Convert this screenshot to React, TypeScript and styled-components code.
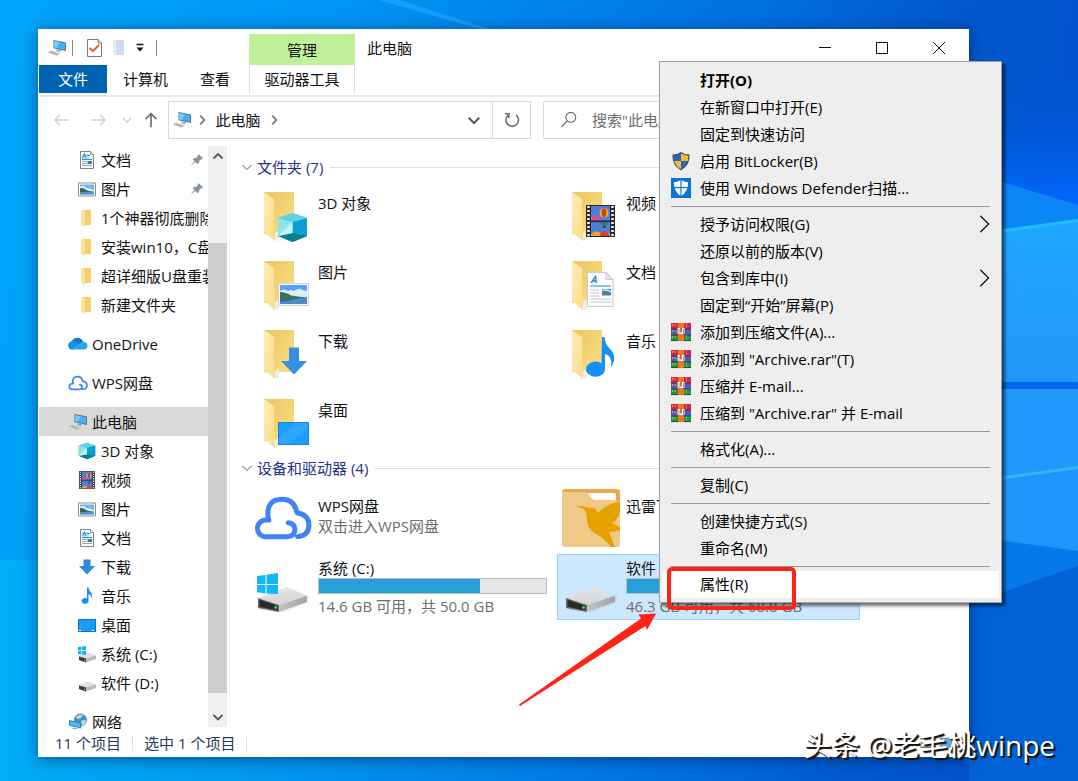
import React from "react";
import styled, { createGlobalStyle, css } from "styled-components";

const GlobalStyle = createGlobalStyle`
  *, *::before, *::after { box-sizing: border-box; }
  html, body, #root { height: 100%; }
  body { margin: 0; overflow: hidden; }
  body, button, input {
    font-family: "Open Sans", "Noto Sans CJK SC", sans-serif;
    font-size: 15px;
    line-height: 20px;
  }
  button { margin: 0; padding: 0; border: 0; background: none; color: inherit; text-align: left; cursor: default; }
  a { color: inherit; text-decoration: none; }
  ul { list-style: none; margin: 0; padding: 0; }
  h2 { margin: 0; font-weight: 400; font-size: 15px; }
  svg { display: block; flex: none; }
`;

/* ---------- desktop ---------- */

const Desktop = styled.div`
  position: relative;
  display: flex;
  height: 100vh;
  padding: 29px 109px 24px 38px;
  overflow: hidden;
  background: #0078e0;
`;

const WallpaperSvg = styled.svg`
  position: absolute;
  inset: 0;
  width: 100%;
  height: 100%;
`;

const Wallpaper = () => (
  <WallpaperSvg viewBox="0 0 1078 781" preserveAspectRatio="none" aria-hidden="true">
    <defs>
      <linearGradient id="sky" x1="0" y1="0" x2="1" y2="0.1">
        <stop offset="0" stopColor="#00a6fa" />
        <stop offset="0.33" stopColor="#0093f4" />
        <stop offset="0.66" stopColor="#0074e2" />
        <stop offset="0.88" stopColor="#0058cc" />
        <stop offset="1" stopColor="#0052cc" />
      </linearGradient>
      <linearGradient id="glow" x1="0" y1="0" x2="1" y2="0">
        <stop offset="0" stopColor="#00b4f6" stopOpacity="0.9" />
        <stop offset="1" stopColor="#0068d8" stopOpacity="0" />
      </linearGradient>
      <linearGradient id="pane" x1="0" y1="0" x2="0" y2="1">
        <stop offset="0" stopColor="#1fa6ff" />
        <stop offset="1" stopColor="#2196fa" />
      </linearGradient>
      <linearGradient id="deep" x1="0" y1="0" x2="0" y2="1">
        <stop offset="0" stopColor="#0052cc" stopOpacity="0" />
        <stop offset="1" stopColor="#0068ff" />
      </linearGradient>
    </defs>
    <rect width="1078" height="781" fill="url(#sky)" />
    <rect y="560" width="900" height="221" fill="url(#glow)" opacity="0.7" />
    <path d="M378 0L480 29H490L400 0Z" fill="#20a4ff" opacity="0.7" />
    <rect x="969" y="60" width="109" height="145" fill="url(#deep)" />
    <path d="M969 172L1078 205V222L969 234Z" fill="#0a86f6" />
    <path d="M969 234L1078 219V382H969Z" fill="url(#pane)" />
    <path d="M969 234L1078 219V222L969 237Z" fill="#22bcff" />
    <rect x="969" y="382" width="109" height="7" fill="#0068ec" />
    <rect x="969" y="389" width="109" height="170" fill="#2098fc" />
    <path d="M969 482L1078 467V552L969 536Z" fill="#1f94fa" />
    <path d="M969 481L1078 466V469L969 484Z" fill="#2cb6ff" />
    <path d="M969 536L1078 551V568L969 604Z" fill="#0579ea" />
    <path d="M969 604L1078 566V781H969Z" fill="#0062d4" />
  </WallpaperSvg>
);

/* ---------- icons ---------- */

type IconProps = { size?: number };

const Glyph = ({ size = 20, children, box = "0 0 20 20" }: IconProps & { children: React.ReactNode; box?: string }) => (
  <svg width={size} height={size} viewBox={box} aria-hidden="true">{children}</svg>
);

const PcIcon = ({ size = 20 }: IconProps) => (
  <Glyph size={size}>
    <path d="M6.5 2L19 4.6V13L6.5 10.2Z" fill="#5c6f7c" />
    <path d="M7.2 3L18.2 5.3V12L7.2 9.5Z" fill="#3fb2f7" />
    <path d="M7.2 3L13 4.2L9.5 10L7.2 9.5Z" fill="#74ccfb" />
    <path d="M10 11.2L14.5 12.3L12.8 14L9 13Z" fill="#9aa7b0" />
    <path d="M1 14.2L4 12.6L13.5 15L10 17.6Z" fill="#c9d1d6" />
    <path d="M1 14.2L10 17.6M2.5 13.4L11.5 16.5M5 13L4 15.2M8 14L7 16.2" stroke="#98a4ac" strokeWidth="0.6" fill="none" />
  </Glyph>
);

const DocIcon = () => (
  <Glyph>
    <path d="M3.500 1.500H13.500L16.500 4.500V18.500H3.500Z" fill="#fff" stroke="#7d868c" />
    <path d="M13.500 1.500V4.500H16.500" fill="#e5e8ea" stroke="#7d868c" strokeWidth="0.8" />
    <path d="M5 4H12V9H5Z" fill="#bfe2f5" />
    <path d="M5.500 8L7.500 4L9 8M10 5.500H13M5 9.500H15" stroke="#2a8fcf" strokeWidth="1.1" fill="none" />
    <path d="M5 11.500H9.500M5 13.500H9.500M5 15.500H15" stroke="#8d979e" strokeWidth="0.900" fill="none" />
    <path d="M10.500 11H15V14H10.500Z" fill="#2f7fae" />
  </Glyph>
);

const PictureIcon = () => (
  <Glyph>
    <path d="M1.5 4H18.5V17H1.5Z" fill="#fff" stroke="#8a9299" />
    <path d="M3 5.5H17V15.5H3Z" fill="#6fb4ee" />
    <path d="M3 7.5Q7 6 10 9Q13 9 17 11V12.5H3Z" fill="#d9ecfa" />
    <path d="M3 9Q7 9 10 11.4L17 13V13.5H3Z" fill="#2f6a54" />
    <path d="M3 13.2H17V15.5H3Z" fill="#4f98cf" />
  </Glyph>
);

const SmallFolderIcon = () => (
  <Glyph>
    <path d="M6 2H14V17H6Z" fill="#f3d06c" />
    <path d="M4 2L8 4V19L4 17Z" fill="#fbe39d" />
  </Glyph>
);

const OneDriveIcon = () => (
  <Glyph>
    <path d="M4.5 15.5A4.2 4.2 0 0 1 4 7.2A6 6 0 0 1 14.6 7Z" fill="#0c62b8" />
    <path d="M4 7.3A6 6 0 0 1 14.8 7.6L17 9L8 13Z" fill="#1173cf" />
    <path d="M3.8 15.5A4 4 0 0 1 2 8.2Q5 6.2 8 8.2L16 13Z" fill="#1a8fe0" />
    <path d="M3 15.2L12.4 9.2A4.2 4.2 0 0 1 16.3 8A3.8 3.8 0 0 1 16.3 15.5H4Z" fill="#28a8ea" />
  </Glyph>
);

const WpsCloud = ({ size = 20 }: IconProps) => (
  <Glyph size={size} box="0 0 56 56">
    <path
      d="M14.500 30A12 12 0 0 0 13 30A8 8 0 0 0 10 46H33Q39.500 45 39.500 38.500Q39 33 33 32.500M14 30Q10.500 10 27 10Q39 10 41.500 23Q53 25 53 35Q53 45 42 46"
      fill="none" stroke="#3f83f5" strokeWidth="4.800" strokeLinecap="round" strokeLinejoin="round" />
  </Glyph>
);

const CubeShape = () => (
  <>
    <path d="M1 5L15.500 0L30 5V23L15.500 29L1 23Z" fill="#3fc4d8" />
    <path d="M1 5L15.500 9V29L1 23Z" fill="#8fe4ea" />
    <path d="M15.500 9L30 5V23L15.500 29Z" fill="#0aa0d4" />
    <path d="M1 5L15.500 0L30 5L15.500 9Z" fill="#5fd2e4" />
    <path d="M15.500 20L30 23L15.500 29L1 23Z" fill="#0a7f94" />
    <path d="M1 23L15.500 9V20Z" fill="#c2f2f3" />
  </>
);

const CubeIcon = () => (
  <Glyph box="-2 -1 35 31"><CubeShape /></Glyph>
);

const FilmShape = () => (
  <>
    <rect width="29" height="32" fill="#2b2b2b" />
    <rect x="5" y="1" width="19" height="30" fill="#4a7fe0" />
    <path d="M5 12L8 9L11 12L14 11V16H5Z" fill="#d8508c" />
    <ellipse cx="18" cy="8" rx="4.500" ry="5" fill="#e8b71e" />
    <path d="M16.500 3.500Q14.500 8 17 12.500H19Q21.500 8 19.500 3.500Z" fill="#cf3b23" />
    <path d="M14 17.500H23L19.500 21H17Z" fill="#3c7a35" />
    <path d="M17.500 21H19.500V23H17.500Z" fill="#333" />
    <path d="M5 29Q10 24 15 28L24 28V31H5Z" fill="#e0a52a" />
    <path d="M14 31A4.500 5 0 0 1 23 31Z" fill="#d4402a" />
    <rect x="5" y="15.500" width="19" height="1.500" fill="#10264f" />
    <path d="M2.500 1V32M26.500 1V32" stroke="#fff" strokeWidth="2.400" strokeDasharray="2 2" />
  </>
);

const FilmIcon = () => (
  <Glyph box="-3 -2 35 36"><FilmShape /></Glyph>
);

const DownIcon = () => (
  <Glyph><path d="M6.500 2.500H13.500V9H18L10 17.500L2 9H6.500Z" fill="#2f86da" /></Glyph>
);

const MusicIcon = () => (
  <Glyph>
    <path d="M10 1.500H11.500Q12 5 14.500 7.500Q16 10 14.500 13Q14.500 9 11.500 8V14.500A3.500 2.900 0 1 1 10 12.500Z" fill="#1590f2" />
  </Glyph>
);

const DesktopIcon = () => (
  <Glyph>
    <rect x="1" y="4" width="18" height="13" fill="#1273c4" />
    <rect x="2" y="5" width="16" height="11" fill="#1d9cf6" />
    <path d="M2 15.500H4M15 15.500H17" stroke="#fff" strokeWidth="1" />
  </Glyph>
);

const DriveIcon = ({ windows }: { windows?: boolean }) => (
  <Glyph>
    <path d="M2 12.500L10 8.800L19 11.500V15L9 18.500L2 16Z" fill="#b9bbbd" />
    <path d="M2 12.500L10 8.800L19 11.500L9 14.500Z" fill="#dfe0e1" />
    <path d="M2 12.500L9 14.500V18.500L2 16Z" fill="#3a3c3e" />
    <path d="M7 16H8.200V17H7Z" fill="#4be04b" />
    {windows && <path d="M1 3L4.500 2.500V6.200H1ZM5.200 2.400L9 2V6.200H5.200ZM1 7H4.500V10.500L1 10ZM5.200 7H9V11L5.200 10.600Z" fill="#12b0ef" />}
  </Glyph>
);

const NetworkIcon = () => (
  <Glyph>
    <circle cx="12.500" cy="8" r="6.500" fill="#4f8fb8" />
    <path d="M8 5Q11 2 15 3Q13 7 9 7ZM13 9Q17 7 18.500 9Q17 13 14 14Z" fill="#b5d9ea" />
    <path d="M1 8L13 10.500V16.500L1 13.500Z" fill="#2a7db8" />
    <path d="M2 9.200L12 11.300V15.200L2 12.700Z" fill="#4fb8f6" />
    <path d="M6 15.500L11 17L9 18.500L4 17Z" fill="#93a2ac" />
  </Glyph>
);

const PinIcon = () => (
  <Glyph size={14} box="0 0 14 14">
    <path d="M8.500 1L13 5.200L11.800 6L9.500 7.500L8.700 10.500L7.500 11L5.300 8.900L1.500 12.500L1 12.400L4.600 8.100L2.800 6.200L3.500 5.200L6.600 4.800L8 2.500Z" fill="#8594a0" />
  </Glyph>
);

const ShieldIcon = () => (
  <Glyph>
    <path d="M10 1Q14 3.500 18.500 3.500Q19.500 14 10 19.500Q0.500 14 1.500 3.500Q6 3.500 10 1Z" fill="#4b4f55" />
    <path d="M10 2.500Q6.500 4.600 2.800 4.800Q2.600 7.500 3.200 10H10Z" fill="#1f66c4" />
    <path d="M10 2.500Q13.500 4.600 17.200 4.800Q17.400 7.500 16.800 10H10Z" fill="#fdbb2e" />
    <path d="M10 18Q4.800 15 3.200 10H10Z" fill="#fdbb2e" />
    <path d="M10 18Q15.200 15 16.800 10H10Z" fill="#1f66c4" />
  </Glyph>
);

const DefenderIcon = () => (
  <Glyph>
    <rect width="20" height="20" fill="#0a74d8" />
    <path d="M10 2Q13 4 17 4.200Q17.600 13.500 10 18Q2.400 13.500 3 4.200Q7 4 10 2Z" fill="#fff" />
    <path d="M10 2V18M2.500 9.600H17.500" stroke="#0a74d8" strokeWidth="1.200" />
  </Glyph>
);

const RarIcon = () => (
  <Glyph>
    <rect y="1" width="20" height="6" fill="#d0254f" />
    <rect y="7" width="20" height="6" fill="#5358bc" />
    <rect y="13" width="20" height="6" fill="#1f9a3e" />
    <path d="M0 7H20M0 13H20M0 18.600H20" stroke="#2b2340" strokeWidth="0.700" />
    <path d="M1.500 2V18M4 2V18" stroke="#f0b030" strokeWidth="0.900" strokeDasharray="2 4" />
    <rect x="7" y="1" width="6" height="18" fill="#f0761c" />
    <rect x="6.500" y="6" width="7" height="6" fill="#fff" />
    <path d="M8 7V12M12.500 7V12" stroke="#77757a" strokeWidth="0.800" />
    <path d="M10 6V10.500" stroke="#d83a1c" strokeWidth="1.600" />
    <path d="M15.500 1V6M15.500 13V18" stroke="#fff" strokeOpacity="0.3" strokeWidth="1" />
  </Glyph>
);

const Chevron = ({ dir, color = "#5a5a5a", size = 12, weight = 1.5 }: { dir: "up" | "down" | "right"; color?: string; size?: number; weight?: number }) => {
  const d = { up: "M1.500 8.500L6 4L10.500 8.500", down: "M1.500 4L6 8.500L10.500 4", right: "M4 1.500L8.500 6L4 10.500" }[dir];
  return <Glyph size={size} box="0 0 12 12"><path d={d} fill="none" stroke={color} strokeWidth={weight} /></Glyph>;
};

/* Large open folder with an emblem over its lower right corner. */
const BigFolder = ({ children }: { children: React.ReactNode }) => (
  <svg width="58" height="58" viewBox="0 0 58 58" aria-hidden="true">
    <defs>
      <linearGradient id="folderBack" x1="0" y1="0" x2="1" y2="1">
        <stop offset="0" stopColor="#ecc660" />
        <stop offset="1" stopColor="#fbdf86" />
      </linearGradient>
      <linearGradient id="folderFront" x1="0" y1="0" x2="1" y2="1">
        <stop offset="0" stopColor="#ffedb5" />
        <stop offset="1" stopColor="#fbdb88" />
      </linearGradient>
    </defs>
    <path d="M7 4H37V46H7Z" fill="url(#folderBack)" />
    <path d="M17 46L22 42V52L17 53Z" fill="#eee" />
    <path d="M7 4L17 11V37L18 38V53L7 44Z" fill="url(#folderFront)" />
    {children}
  </svg>
);

const PictureEmblem = () => (
  <g transform="translate(21 26)">
    <rect x="0.500" y="0.500" width="30" height="22" fill="#f6f7f8" stroke="#d0d4d8" />
    <rect x="2" y="2" width="27" height="19" fill="#5c9ff0" />
    <path d="M2 8Q6 5 10 8Q13 6 16 8Q21 4 24 7L29 8V14H2Z" fill="#dcebfa" />
    <path d="M2 9Q8 9 13 12.500L27 14.500V15.500H2Z" fill="#3a7350" />
    <rect x="2" y="15" width="27" height="6" fill="#4a8cc4" />
    <path d="M2 15H22L10 18L2 19Z" fill="#2c5f6e" opacity="0.7" />
  </g>
);
const DownEmblem = () => <path d="M32 21.500H42V35H50L37 48.500L24 35H32Z" fill="#3390e6" />;
const DesktopEmblem = () => (
  <g transform="translate(21 27)">
    <rect width="31" height="23" fill="#1683dc" />
    <rect x="1" y="1" width="29" height="21" fill="#1a9fff" />
    <path d="M30 1V6L11 22H1V16L18 1Z" fill="#3aaeff" opacity="0.6" />
  </g>
);
const DocEmblem = () => (
  <g transform="translate(22 15)">
    <path d="M0.500 0.500H19L26 7.500V34.500H0.500Z" fill="#fdfdfe" stroke="#c4cacf" />
    <path d="M19 0.500V7.500H26Z" fill="#e3e7ea" stroke="#c4cacf" />
    <path d="M4 11L8.500 4.500L9.500 11M5.500 9H9" stroke="#2b88c8" strokeWidth="1.400" fill="none" />
    <path d="M3 14H24" stroke="#5ab0dc" strokeWidth="1.400" />
    <path d="M3 18H12M3 21H12M3 24H12M3 27H24M3 30H24" stroke="#b9c2c9" strokeWidth="0.900" />
    <rect x="15" y="17" width="9" height="6.500" fill="#3f86ae" />
    <path d="M15 19Q19 18 24 20.500V19Q20 16 15 18Z" fill="#cfe6f2" />
  </g>
);
const MusicEmblem = () => (
  <path d="M37 11H39.500Q40 18 45 23Q53 31 46 41Q48 30 40 28V43A9.500 7.500 0 1 1 36.500 37.300Z" fill="#1590fa" />
);

const BigDrive = ({ windows }: { windows?: boolean }) => (
  <svg width="58" height="58" viewBox="0 0 58 58" aria-hidden="true">
    <defs>
      <linearGradient id="driveTop" x1="0" y1="0" x2="0" y2="1">
        <stop offset="0" stopColor="#e6e6e8" />
        <stop offset="1" stopColor="#d3d4d6" />
      </linearGradient>
      <linearGradient id="driveSide" x1="0" y1="0" x2="1" y2="0">
        <stop offset="0" stopColor="#c3c4c6" />
        <stop offset="1" stopColor="#a2a4a7" />
      </linearGradient>
    </defs>
    <path d="M1 41.500L30 32L52 38V44L26 55L1 52Z" fill="#9a9a9a" opacity="0.15" />
    <path d="M22 47L50 37.500V44L22 54Z" fill="url(#driveSide)" />
    <path d="M1 40L30 29L50 37.500L22 47Z" fill="url(#driveTop)" />
    <path d="M1 40L22 47V54L1 50Z" fill="#67696b" />
    <path d="M2.500 41.800L20.500 47.800V52.500L2.500 48.700Z" fill="#26282a" />
    <circle cx="18.500" cy="49.500" r="1.400" fill="#37e23c" />
    {windows && <path d="M0 18L8.500 17V26H0ZM9.500 16.800L21 15V26H9.500ZM0 27H8.500V35.500L0 34.300ZM9.500 27H21V36L9.500 35.600Z" fill="#10b8f1" />}
  </svg>
);

const ThunderIcon = () => (
  <svg width="58" height="58" viewBox="0 0 58 58" aria-hidden="true">
    <rect width="58" height="58" rx="3" fill="#f0c986" />
    <path d="M0 4Q0 0 4 0H54Q58 0 58 4V14L54 12V6Q54 4 52 4H26L24 3H0Z" fill="#e9a94c" />
    <path d="M26 4H52Q54 4 54 7V11H32Q28 9 26 4Z" fill="#fff" />
    <path d="M14 17Q24 17 27 19Q33 17 36 24Q45 14 58 13V22Q57 30 50 34L58 38V41Q50 43 47 43Q50 50 53 58H49Q42 49 34 45Q25 40 25 32Q25 24 22 20Z" fill="#e5a300" />
  </svg>
);

/* ---------- window chrome ---------- */

const Window = styled.main`
  position: relative;
  flex: 1;
  min-width: 0;
  display: flex;
  flex-direction: column;
  padding: 1px;
  background: #fff;
  color: #111;
  box-shadow: 0 2px 14px rgba(0, 20, 60, 0.55);
`;

const TitleBar = styled.header`
  display: flex;
  align-items: stretch;
  height: 35px;
`;

const QuickAccess = styled.div`
  display: flex;
  align-items: center;
  gap: 5px;
  width: 210px;
  padding-left: 8px;
`;

const QuickButtons = styled.div`
  display: flex;
  align-items: center;
  gap: 4px;
  padding: 0 3px 0 6px;
`;

const IconButton = styled.button<{ $w?: number; $tall?: boolean; $divided?: boolean }>`
  display: flex;
  align-items: center;
  justify-content: center;
  width: ${(p) => p.$w ?? 20}px;
  height: ${(p) => (p.$tall ? "auto" : "24px")};
  border-left: ${(p) => (p.$divided ? "1px solid #d9d9d9" : "0")};
`;

const Rule = styled.span<{ $color?: string }>`
  width: 1px;
  height: 16px;
  background: ${(p) => p.$color ?? "#8a8a8a"};
`;

const ContextTab = styled.div`
  width: 106px;
  margin-top: 4px;
  padding-top: 6px;
  background: #c0f09a;
  text-align: center;
`;

const WindowTitle = styled.div`
  flex: 1;
  padding: 8px 12px;
`;

const Caption = styled.div`
  display: flex;
  padding-right: 1px;
`;

const CaptionButton = styled.button`
  display: flex;
  align-items: center;
  justify-content: center;
  width: 57px;
`;

const Tabs = styled.nav`
  display: flex;
  align-items: flex-start;
  height: 32px;
  border-bottom: 2px solid #e8e9ea;
`;

const Tab = styled.button<{ $kind?: "file" | "context" }>`
  height: 28px;
  padding: 0 16px;
  text-align: center;
  ${(p) => p.$kind === "file" && css`
    width: 68px;
    background: #0063b1;
    color: #fff;
  `}
  ${(p) => p.$kind === "context" && css`
    width: 106px;
    padding: 0;
    border: solid #dcdcdc;
    border-width: 0 1px;
  `}
`;

const TabGroup = styled.div`
  display: flex;
  width: 210px;
`;

const AddressRow = styled.div`
  display: flex;
  align-items: center;
  height: 46px;
  padding-right: 10px;
`;

const NavButtons = styled.div`
  display: flex;
  align-items: center;
  width: 129px;
  padding-left: 13px;
`;

const HistoryButtons = styled.div`
  display: flex;
  align-items: center;
  gap: 16px;
  margin-right: 12px;
`;

const AddressBox = styled.div`
  display: flex;
  align-items: stretch;
  flex: 361 1 0;
  min-width: 0;
  height: 38px;
  border: 1px solid #d9d9d9;
`;

const Crumbs = styled.div`
  flex: 1;
  display: flex;
  align-items: center;
  gap: 4px;
  padding-left: 3px;
  color: #111;
`;

const SearchBox = styled.label`
  display: flex;
  align-items: center;
  flex: 397 1 0;
  min-width: 0;
  height: 38px;
  margin-left: 12px;
  padding-left: 16px;
  gap: 14px;
  border: 1px solid #d9d9d9;
`;

const SearchInput = styled.input`
  flex: 1;
  min-width: 0;
  border: 0;
  outline: 0;
  padding: 0;
  background: transparent;
  &::placeholder { color: #6d6d6d; opacity: 1; }
`;

/* ---------- navigation pane ---------- */

const Body = styled.div`
  display: flex;
  flex: 1;
  min-height: 0;
`;

const NavPane = styled.nav`
  width: 169px;
  padding-top: 2px;
  overflow: hidden;
`;

const TreeRow = styled.a<{ $level: 1 | 2; $selected?: boolean; $spaced?: boolean }>`
  display: flex;
  align-items: center;
  gap: 4px;
  height: 29px;
  margin-top: ${(p) => (p.$spaced ? 10 : 0)}px;
  padding-left: ${(p) => (p.$level === 1 ? 29 : 38)}px;
  background: ${(p) => (p.$selected ? "#d9d9d9" : "transparent")};
  white-space: nowrap;
`;

const PinSlot = styled.span`
  margin-left: auto;
  padding-right: 4px;
`;

const Scrollbar = styled.div`
  display: flex;
  flex-direction: column;
  width: 19px;
  margin-top: 3px;
  margin-bottom: 2px;
  background: #f0f0f0;
`;

const ScrollButton = styled.button`
  display: flex;
  align-items: center;
  justify-content: center;
  height: 20px;
`;

const ScrollTrack = styled.div`
  flex: 1;
  display: flex;
  flex-direction: column;
  padding: 77px 0 14px;
`;

const ScrollThumb = styled.div`
  flex: 1;
  background: #cdcdcd;
`;

/* ---------- content ---------- */

const Content = styled.section`
  flex: 1;
  min-width: 0;
  margin-left: 2px;
  padding: 13px 0 0 11px;
  overflow: hidden;
  border-left: 1px solid #f4f4f4;
`;

const GroupHeader = styled.h2`
  display: flex;
  align-items: center;
  gap: 4px;
  height: 22px;
  margin-bottom: 6px;
  color: #1e3287;
  &::after {
    content: "";
    flex: 1;
    height: 1px;
    margin-left: 3px;
    background: #dedede;
  }
`;

const TileGrid = styled.ul`
  display: grid;
  grid-template-columns: repeat(auto-fill, 303px);
  gap: 3px 5px;
  padding-left: 8px;
`;

const Tile = styled.li<{ $selected?: boolean }>`
  display: flex;
  height: 66px;
  padding: 3px 4px 3px 4px;
  border: 1px solid ${(p) => (p.$selected ? "#99d1ff" : "transparent")};
  background: ${(p) => (p.$selected ? "#cce8ff" : "transparent")};
`;

const IconSlot = styled.span<{ $shift?: boolean }>`
  width: 64px;
  padding-left: ${(p) => (p.$shift ? 3 : 0)}px;
`;

const tops = { folder: 5, device: 7, drive: 0 };

const TileText = styled.div<{ $kind: keyof typeof tops }>`
  flex: 1;
  display: flex;
  flex-direction: column;
  padding-top: ${(p) => tops[p.$kind]}px;
  white-space: nowrap;
`;

const Sub = styled.span`
  color: #6d6d6d;
`;

const Meter = styled.div`
  height: 17px;
  margin: 0 0 2px;
  border: 1px solid #bcbcbc;
  background: #e6e6e6;
`;

const MeterFill = styled.div`
  height: 100%;
  background: #26a0da;
`;

const StatusBar = styled.footer`
  display: flex;
  align-items: center;
  gap: 11px;
  height: 27px;
  padding: 0 12px 0 16px;
  color: #1e395b;
`;

const ViewButtons = styled.div`
  display: flex;
  margin-left: auto;
`;

/* ---------- context menu ---------- */

const Menu = styled.div`
  position: absolute;
  left: 659px;
  top: 61px;
  width: 343px;
  padding: 5px 2px 4px;
  border: 1px solid #a0a0a0;
  background: #eeeeee;
  color: #000;
  box-shadow: 3px 3px 3px rgba(0, 0, 0, 0.55);
`;

const MenuItem = styled.button<{ $bold?: boolean; $hot?: boolean }>`
  display: flex;
  align-items: center;
  gap: 9px;
  width: 100%;
  height: 27px;
  padding: 0 4px 2px 9px;
  font-weight: ${(p) => (p.$bold ? 700 : 400)};
  background: ${(p) => (p.$hot ? "#ffffff" : "transparent")};
  white-space: nowrap;
`;

const MenuIcon = styled.span`
  width: 20px;
`;

const MenuLabel = styled.span`
  flex: 1;
`;

const Separator = styled.hr`
  height: 1px;
  margin: 4px 9px;
  border: 0;
  background: #969696;
`;

/* ---------- annotations ---------- */

const Highlight = styled.div`
  position: absolute;
  left: 667px;
  top: 567px;
  width: 129px;
  height: 43px;
  border: 4px solid #ff2314;
  border-radius: 5px;
`;

const ArrowSvg = styled.svg`
  position: absolute;
  left: 515px;
  top: 608px;
`;

const Watermark = styled.div`
  position: absolute;
  right: 23px;
  bottom: 18px;
  color: #fff;
  font-size: 28px;
  line-height: 36px;
  text-shadow: 1px 1px 0 #111, 2px 2px 1px #111;
  white-space: nowrap;
`;

/* ---------- data ---------- */

type TreeEntry = { label: string; icon: React.ReactNode; level: 1 | 2; pinned?: boolean; selected?: boolean; spaced?: boolean };

const tree: TreeEntry[] = [
  { label: "文档", icon: <DocIcon />, level: 2, pinned: true },
  { label: "图片", icon: <PictureIcon />, level: 2, pinned: true },
  { label: "1个神器彻底删除", icon: <SmallFolderIcon />, level: 2 },
  { label: "安装win10，C盘", icon: <SmallFolderIcon />, level: 2 },
  { label: "超详细版U盘重装", icon: <SmallFolderIcon />, level: 2 },
  { label: "新建文件夹", icon: <SmallFolderIcon />, level: 2 },
  { label: "OneDrive", icon: <OneDriveIcon />, level: 1, spaced: true },
  { label: "WPS网盘", icon: <WpsCloud />, level: 1, spaced: true },
  { label: "此电脑", icon: <PcIcon />, level: 1, spaced: true, selected: true },
  { label: "3D 对象", icon: <CubeIcon />, level: 2 },
  { label: "视频", icon: <FilmIcon />, level: 2 },
  { label: "图片", icon: <PictureIcon />, level: 2 },
  { label: "文档", icon: <DocIcon />, level: 2 },
  { label: "下载", icon: <DownIcon />, level: 2 },
  { label: "音乐", icon: <MusicIcon />, level: 2 },
  { label: "桌面", icon: <DesktopIcon />, level: 2 },
  { label: "系统 (C:)", icon: <DriveIcon windows />, level: 2 },
  { label: "软件 (D:)", icon: <DriveIcon />, level: 2 },
  { label: "网络", icon: <NetworkIcon />, level: 1, spaced: true },
];

const folders: { label: string; emblem: React.ReactNode }[] = [
  { label: "3D 对象", emblem: <g transform="translate(20 25)"><CubeShape /></g> },
  { label: "视频", emblem: <g transform="translate(21 17)"><FilmShape /></g> },
  { label: "图片", emblem: <PictureEmblem /> },
  { label: "文档", emblem: <DocEmblem /> },
  { label: "下载", emblem: <DownEmblem /> },
  { label: "音乐", emblem: <MusicEmblem /> },
  { label: "桌面", emblem: <DesktopEmblem /> },
];

type Entry = "-" | { label: string; icon?: React.ReactNode; bold?: boolean; more?: boolean; hot?: boolean };

const menu: Entry[] = [
  { label: "打开(O)", bold: true },
  { label: "在新窗口中打开(E)" },
  { label: "固定到快速访问" },
  { label: "启用 BitLocker(B)", icon: <ShieldIcon /> },
  { label: "使用 Windows Defender扫描...", icon: <DefenderIcon /> },
  "-",
  { label: "授予访问权限(G)", more: true },
  { label: "还原以前的版本(V)" },
  { label: "包含到库中(I)", more: true },
  { label: "固定到“开始”屏幕(P)" },
  { label: "添加到压缩文件(A)...", icon: <RarIcon /> },
  { label: "添加到 \"Archive.rar\"(T)", icon: <RarIcon /> },
  { label: "压缩并 E-mail...", icon: <RarIcon /> },
  { label: "压缩到 \"Archive.rar\" 并 E-mail", icon: <RarIcon /> },
  "-",
  { label: "格式化(A)..." },
  "-",
  { label: "复制(C)" },
  "-",
  { label: "创建快捷方式(S)" },
  { label: "重命名(M)" },
  "-",
  { label: "属性(R)", hot: true },
];

const DriveTile = ({ label, usage, used, windows, selected }: { label: string; usage: string; used: number; windows?: boolean; selected?: boolean }) => (
  <Tile $selected={selected}>
    <IconSlot $shift><BigDrive windows={windows} /></IconSlot>
    <TileText $kind="drive">
      <span>{label}</span>
      <Meter role="meter" aria-label={label} aria-valuenow={used} aria-valuemin={0} aria-valuemax={100}>
        <MeterFill style={{ width: `${used}%` }} />
      </Meter>
      <Sub>{usage}</Sub>
    </TileText>
  </Tile>
);

/* ---------- page ---------- */

export default function App() {
  return (
    <>
      <GlobalStyle />
      <Desktop>
        <Wallpaper />
        <Window>
          <TitleBar>
            <QuickAccess>
              <PcIcon />
              <Rule />
              <QuickButtons>
                <IconButton aria-label="属性">
                  <Glyph size={20}>
                    <path d="M3.500 1.500H14L17.500 5V18.500H3.500Z" fill="#fff" stroke="#7a7a7a" />
                    <path d="M14 1.500V5H17.500" fill="none" stroke="#7a7a7a" />
                    <path d="M5.500 10L9 13L15 7" fill="none" stroke="#e8571a" strokeWidth="1.800" />
                  </Glyph>
                </IconButton>
                <IconButton aria-label="新建文件夹">
                  <Glyph size={20}>
                    <path d="M6 2H16V17H6Z" fill="#cfdcef" />
                    <path d="M5 2L8 3.500V18.500L5 17Z" fill="#e6edf8" />
                  </Glyph>
                </IconButton>
                <IconButton $w={16} aria-label="自定义快速访问工具栏">
                  <Glyph size={10} box="0 0 10 10"><path d="M1.500 1.500H8.500" stroke="#111" strokeWidth="1.500" /><path d="M1.500 4.500H8.500L5 8.500Z" fill="#111" /></Glyph>
                </IconButton>
              </QuickButtons>
              <Rule />
            </QuickAccess>
            <ContextTab>管理</ContextTab>
            <WindowTitle>此电脑</WindowTitle>
            <Caption>
              <CaptionButton aria-label="最小化"><Glyph size={12} box="0 0 12 12"><path d="M0 5.500H12" stroke="#111" /></Glyph></CaptionButton>
              <CaptionButton aria-label="最大化"><Glyph size={12} box="0 0 12 12"><path d="M0.500 0.500H11.500V11.500H0.500Z" fill="none" stroke="#111" /></Glyph></CaptionButton>
              <CaptionButton aria-label="关闭"><Glyph size={12} box="0 0 12 12"><path d="M0 0L12 12M12 0L0 12" stroke="#111" /></Glyph></CaptionButton>
            </Caption>
          </TitleBar>

          <Tabs aria-label="功能区">
            <TabGroup>
              <Tab $kind="file">文件</Tab>
              <Tab>计算机</Tab>
              <Tab>查看</Tab>
            </TabGroup>
            <Tab $kind="context">驱动器工具</Tab>
          </Tabs>

          <AddressRow>
            <NavButtons>
              <HistoryButtons>
                <IconButton aria-label="后退">
                  <Glyph size={18}><path d="M2 10H18M8 4L2 10L8 16" fill="none" stroke="#cfcfcf" strokeWidth="1.500" /></Glyph>
                </IconButton>
                <IconButton aria-label="前进">
                  <Glyph size={18}><path d="M2 10H18M12 4L18 10L12 16" fill="none" stroke="#cfcfcf" strokeWidth="1.500" /></Glyph>
                </IconButton>
              </HistoryButtons>
              <IconButton $w={14} aria-label="最近浏览的位置"><Chevron dir="down" size={10} color="#c8c8c8" /></IconButton>
              <IconButton $w={34} aria-label="上移">
                <Glyph size={18}><path d="M10 18V3M4 9L10 3L16 9" fill="none" stroke="#6a6a6a" strokeWidth="1.800" /></Glyph>
              </IconButton>
            </NavButtons>
            <AddressBox>
              <Crumbs>
                <PcIcon />
                <Chevron dir="right" size={12} color="#6a6a6a" />
                <IconButton $w={52}>此电脑</IconButton>
                <Chevron dir="right" size={12} color="#6a6a6a" />
              </Crumbs>
              <IconButton $w={36} $tall aria-label="历史记录"><Chevron dir="down" size={14} weight={1.8} /></IconButton>
              <IconButton $w={38} $tall $divided aria-label="刷新">
                <Glyph size={18}>
                  <path d="M14.500 4.300A7 7 0 1 1 5.500 4.700M2 3H6.500V8" fill="none" stroke="#666" strokeWidth="1.700" />
                </Glyph>
              </IconButton>
            </AddressBox>
            <SearchBox>
              <Glyph size={18}><circle cx="12" cy="7" r="5.500" fill="none" stroke="#666" strokeWidth="1.200" /><path d="M8 11L1.500 18" stroke="#666" strokeWidth="1.300" /></Glyph>
              <SearchInput type="search" aria-label="搜索" placeholder={"搜索\"此电脑\""} />
            </SearchBox>
          </AddressRow>

          <Body>
            <NavPane aria-label="导航窗格">
              {tree.map((t, i) => (
                <TreeRow key={i} href="#" $level={t.level} $selected={t.selected} $spaced={t.spaced}>
                  {t.icon}
                  <span>{t.label}</span>
                  {t.pinned && <PinSlot><PinIcon /></PinSlot>}
                </TreeRow>
              ))}
            </NavPane>
            <Scrollbar>
              <ScrollButton aria-label="向上滚动"><Chevron dir="up" weight={1.8} /></ScrollButton>
              <ScrollTrack><ScrollThumb /></ScrollTrack>
              <ScrollButton aria-label="向下滚动"><Chevron dir="down" weight={1.8} /></ScrollButton>
            </Scrollbar>

            <Content>
              <GroupHeader><Chevron dir="down" weight={1} />文件夹 (7)</GroupHeader>
              <TileGrid>
                {folders.map((f) => (
                  <Tile key={f.label}>
                    <IconSlot $shift><BigFolder>{f.emblem}</BigFolder></IconSlot>
                    <TileText $kind="folder">{f.label}</TileText>
                  </Tile>
                ))}
              </TileGrid>
              <GroupHeader><Chevron dir="down" weight={1} />设备和驱动器 (4)</GroupHeader>
              <TileGrid>
                <Tile>
                  <IconSlot><WpsCloud size={58} /></IconSlot>
                  <TileText $kind="device"><span>WPS网盘</span><Sub>双击进入WPS网盘</Sub></TileText>
                </Tile>
                <Tile>
                  <IconSlot><ThunderIcon /></IconSlot>
                  <TileText $kind="device">迅雷下载</TileText>
                </Tile>
                <DriveTile label="系统 (C:)" usage="14.6 GB 可用，共 50.0 GB" used={71} windows />
                <DriveTile label="软件 (D:)" usage="46.3 GB 可用，共 68.8 GB" used={33} selected />
              </TileGrid>
            </Content>
          </Body>

          <StatusBar>
            <span>11 个项目</span>
            <Rule $color="#e2e2e2" />
            <span>选中 1 个项目</span>
            <Rule $color="#e2e2e2" />
            <ViewButtons>
              <IconButton aria-label="详细信息"><Glyph size={14}><path d="M2 4H18M2 10H18M2 16H18" stroke="#777" strokeWidth="2" /></Glyph></IconButton>
              <IconButton aria-label="大图标"><Glyph size={14}><path d="M2 3H18V16H2Z" fill="#5fa8e0" stroke="#777" /></Glyph></IconButton>
            </ViewButtons>
          </StatusBar>
        </Window>

        <Menu role="menu">
          {menu.map((m, i) =>
            m === "-" ? (
              <Separator key={i} />
            ) : (
              <MenuItem key={i} role="menuitem" $bold={m.bold} $hot={m.hot}>
                <MenuIcon>{m.icon}</MenuIcon>
                <MenuLabel>{m.label}</MenuLabel>
                {m.more && <Chevron dir="right" size={22} color="#111" weight={0.7} />}
              </MenuItem>
            )
          )}
        </Menu>

        <ArrowSvg width="146" height="102" aria-hidden="true">
          <path d="M4 96.500L126 10.500L123.500 6.500L141 5.500L132 22L130.500 18L5 98Z" fill="#ff2314" />
        </ArrowSvg>
        <Highlight />
        <Watermark>头条 @老毛桃winpe</Watermark>
      </Desktop>
    </>
  );
}
